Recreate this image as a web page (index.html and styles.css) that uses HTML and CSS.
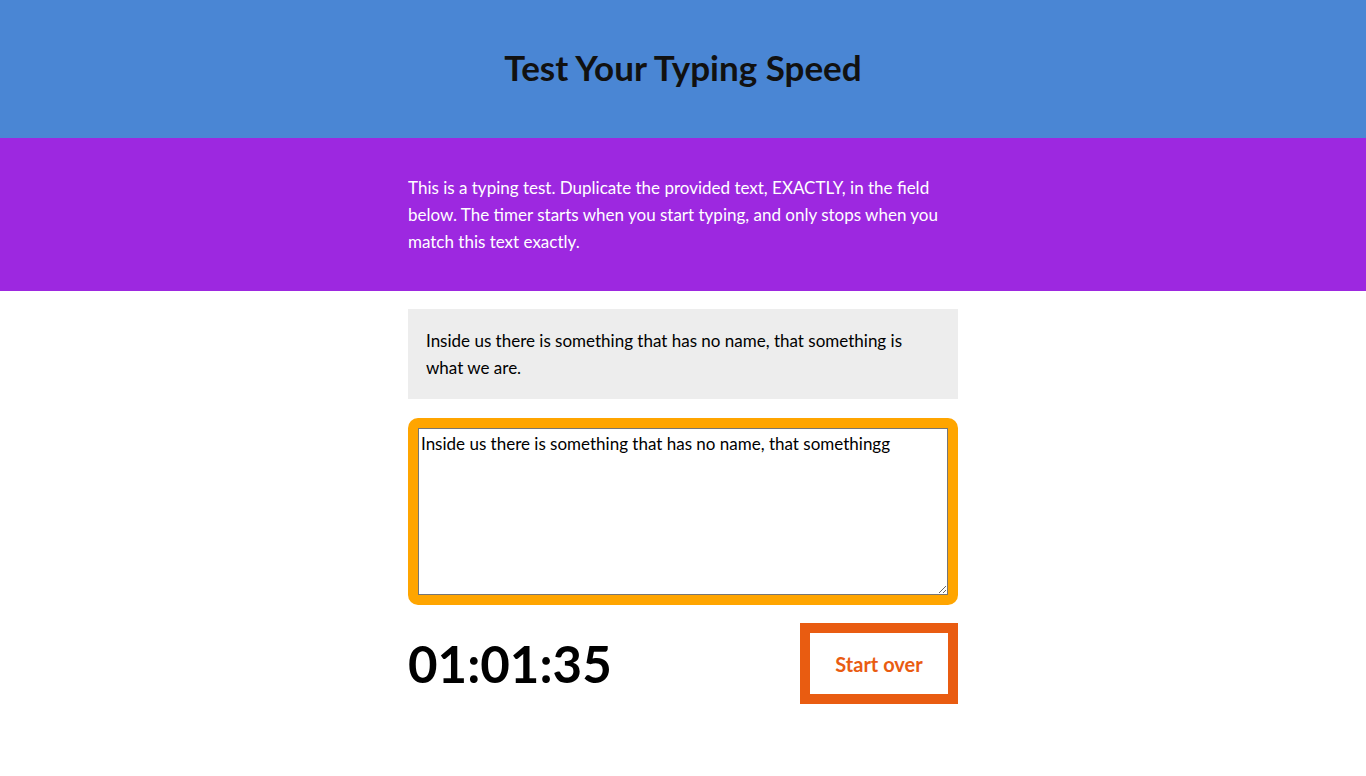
FILE: index.html
```html
<!DOCTYPE html>
<html lang="en">
<head>
<meta charset="utf-8">
<title>Typing Speed Test</title>
<link rel="stylesheet" href="styles.css">
</head>
<body>
<header class="masthead">
  <h1 class="title">Test Your Typing Speed</h1>
</header>
<section class="intro">
  <p class="intro-text">This is a typing test. Duplicate the provided text, EXACTLY, in the field below. The timer starts when you start typing, and only stops when you match this text exactly.</p>
</section>
<main class="main">
  <div class="origin-text">
    <p>Inside us there is something that has no name, that something is what we are.</p>
  </div>
  <div class="test-wrapper">
    <textarea class="test-area" rows="6">Inside us there is something that has no name, that somethingg</textarea>
  </div>
  <div class="meta">
    <div class="timer">01:01:35</div>
    <button class="reset" type="button">Start over</button>
  </div>
</main>
</body>
</html>
```
FILE: styles.css
```css
* { box-sizing: border-box; }
body {
  margin: 0;
  font-family: Lato, "Open Sans", sans-serif;
  font-size: 17px;
  line-height: 27px;
  color: #000;
  background: #fff;
}
.masthead {
  background: #4a86d4;
  height: 138px;
  padding-bottom: 4px;
  display: flex;
  align-items: center;
  justify-content: center;
}
.title {
  margin: 0;
  font-size: 35px;
  font-weight: 700;
  line-height: 40px;
  color: #111;
}
.intro {
  background: #9d28e0;
  padding: 36px 0;
}
.intro-text {
  width: 550px;
  margin: 0 auto;
  color: #fff;
}
.main {
  width: 550px;
  margin: 0 auto;
}
.origin-text {
  margin-top: 18px;
  background: #ededed;
  padding: 18px;
}
.origin-text p { margin: 0; }
.test-wrapper {
  margin-top: 19px;
  background: #ffa500;
  border-radius: 10px;
  padding: 10px;
}
.test-area {
  display: block;
  width: 100%;
  height: 167px;
  margin: 0;
  padding: 3px 2px;
  font-family: inherit;
  font-size: 17px;
  line-height: 23px;
  border: 1px solid #767676;
  color: #000;
}
.meta {
  margin-top: 18px;
  display: flex;
  justify-content: space-between;
  align-items: center;
}
.timer {
  font-size: 51px;
  font-weight: 700;
  line-height: 60px;
}
.reset {
  width: 158px;
  height: 81px;
  border: 10px solid #e95c11;
  background: #fff;
  color: #e95c11;
  font-family: inherit;
  font-size: 20px;
  font-weight: 700;
  cursor: pointer;
}
```
